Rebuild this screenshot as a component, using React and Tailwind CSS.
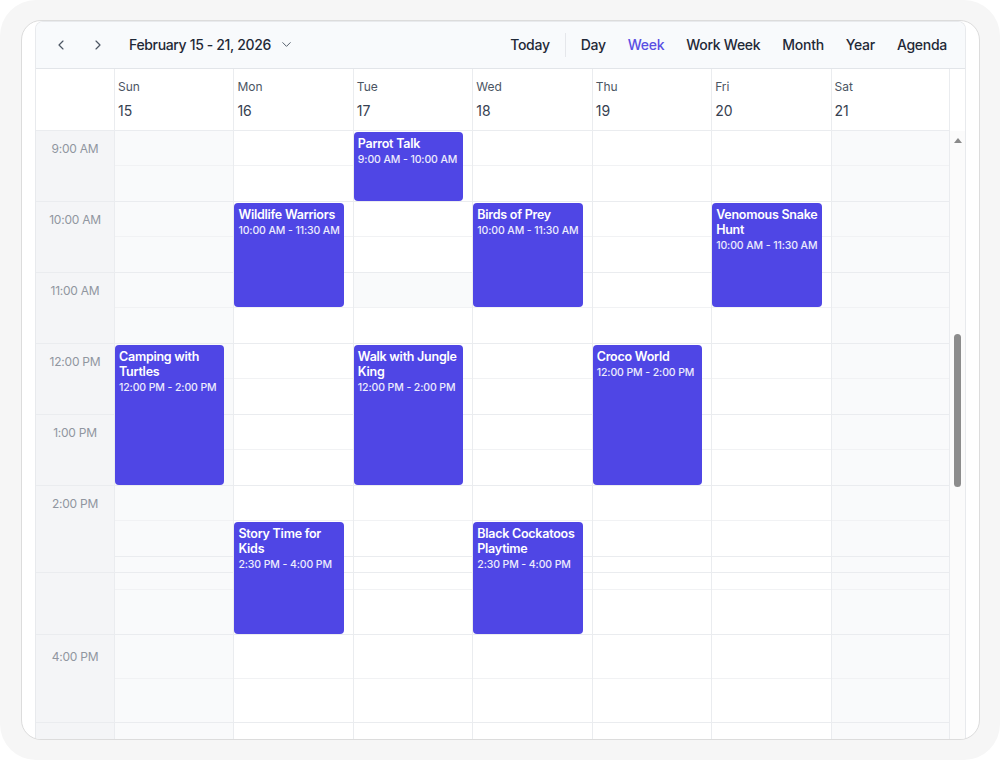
import { ChevronDown, ChevronLeft, ChevronRight } from 'lucide-react'

const days = [
  { name: 'Sun', date: 15, weekend: true },
  { name: 'Mon', date: 16 },
  { name: 'Tue', date: 17 },
  { name: 'Wed', date: 18 },
  { name: 'Thu', date: 19 },
  { name: 'Fri', date: 20 },
  { name: 'Sat', date: 21, weekend: true },
]

// half-hour slots as they sit on screen (the 3 PM block is squeezed)
const rows = [
  { h: 'h-[35px]', label: '9:00 AM', line: 'half' },
  { h: 'h-[36px]', line: 'hour' },
  { h: 'h-[35px]', label: '10:00 AM', line: 'half' },
  { h: 'h-[36px]', line: 'hour' },
  { h: 'h-[35px]', label: '11:00 AM', line: 'half' },
  { h: 'h-[36px]', line: 'hour' },
  { h: 'h-[35px]', label: '12:00 PM', line: 'half' },
  { h: 'h-[36px]', line: 'hour' },
  { h: 'h-[35px]', label: '1:00 PM', line: 'half' },
  { h: 'h-[36px]', line: 'hour' },
  { h: 'h-[35px]', label: '2:00 PM', line: 'half' },
  { h: 'h-[36px]', line: 'hour', timeLine: 'none' },
  { h: 'h-[16px]', line: 'hour', timeLine: 'hour' },
  { h: 'h-[17px]', line: 'half', timeLine: 'none' },
  { h: 'h-[45px]', line: 'hour' },
  { h: 'h-[44px]', label: '4:00 PM', line: 'half' },
  { h: 'h-[44px]', line: 'hour' },
  { h: 'flex-1', line: 'none' },
]

const events = {
  Sun: [{ title: 'Camping with Turtles', time: '12:00 PM - 2:00 PM', pos: 'top-[214px] h-[140px]' }],
  Mon: [
    { title: 'Wildlife Warriors', time: '10:00 AM - 11:30 AM', pos: 'top-[72px] h-[104px]' },
    { title: 'Story Time for Kids', time: '2:30 PM - 4:00 PM', pos: 'top-[391px] h-[112px]' },
  ],
  Tue: [
    { title: 'Parrot Talk', time: '9:00 AM - 10:00 AM', pos: 'top-[1px] h-[69px]' },
    { title: 'Walk with Jungle King', time: '12:00 PM - 2:00 PM', pos: 'top-[214px] h-[140px]' },
  ],
  Wed: [
    { title: 'Birds of Prey', time: '10:00 AM - 11:30 AM', pos: 'top-[72px] h-[104px]' },
    { title: 'Black Cockatoos Playtime', time: '2:30 PM - 4:00 PM', pos: 'top-[391px] h-[112px]' },
  ],
  Thu: [{ title: 'Croco World', time: '12:00 PM - 2:00 PM', pos: 'top-[214px] h-[140px]' }],
  Fri: [{ title: 'Venomous Snake Hunt', time: '10:00 AM - 11:30 AM', pos: 'top-[72px] h-[104px]' }],
  Sat: [],
}

const views = ['Day', 'Week', 'Work Week', 'Month', 'Year', 'Agenda']

const lineClass = {
  hour: 'border-b border-[#eaecef]',
  half: 'border-b border-[#f1f2f4]',
  none: '',
}

function EventCard({ ev }) {
  return (
    <div
      className={`absolute left-0 right-[9px] ${ev.pos} rounded-[4px] bg-[#4f46e5] px-[4px] pt-[4px] text-white`}
    >
      <div className="text-[12.5px] leading-[15px] font-semibold tracking-[-0.02em]">{ev.title}</div>
      <div className="mt-[2px] text-[10.5px] leading-[14px] font-medium tracking-[-0.01em] text-white/90">
        {ev.time}
      </div>
    </div>
  )
}

export default function App() {
  return (
    <div className="w-[1000px] h-[760px] bg-white font-['Inter','Liberation_Sans',sans-serif]">
      <div className="h-full rounded-[36px] bg-[#f6f6f6] pt-[20px] pl-[21px]">
        <div className="w-[959px] h-[720px] rounded-[20px] border border-[#dcdcdc] bg-white px-[13px] overflow-hidden">
          <div className="h-full flex flex-col rounded-t-[8px] border-x border-t border-[#e8eaed] overflow-hidden">
            {/* toolbar */}
            <div className="h-[47px] shrink-0 flex items-center justify-between bg-[#f8fafc] border-b border-[#e2e5e9] pl-[9px] pr-[7px] pb-[1px]">
              <div className="flex items-center">
                <button className="w-8 h-8 flex items-center justify-center text-[#4b5563]">
                  <ChevronLeft size={16} strokeWidth={1.75} />
                </button>
                <button className="ml-[5px] w-8 h-8 flex items-center justify-center text-[#4b5563]">
                  <ChevronRight size={16} strokeWidth={1.75} />
                </button>
                <button className="ml-[15px] flex items-center gap-[8px] text-[14px] font-medium tracking-[-0.025em] text-[#1f2937]">
                  February 15 - 21, 2026
                  <ChevronDown size={15} strokeWidth={1.5} className="text-[#4b5563]" />
                </button>
              </div>
              <div className="flex items-center text-sm font-medium tracking-[-0.02em] text-[#1f2937]">
                <button className="px-[11px] py-1">Today</button>
                <div className="mx-[4px] h-[24px] w-px bg-[#e5e7eb]" />
                {views.map((v) => (
                  <button
                    key={v}
                    className={`px-[11px] py-1 ${v === 'Week' ? 'text-[#5a4fe3]' : ''}`}
                  >
                    {v}
                  </button>
                ))}
              </div>
            </div>

            {/* day header */}
            <div className="h-[62px] shrink-0 grid grid-cols-[78px_repeat(7,1fr)_15px]">
              <div className="border-b border-[#eaecef]" />
              {days.map((d, i) => (
                <div
                  key={d.name}
                  className={`border-l border-b border-[#eaecef] pl-[3px] pt-[10px] ${i === 6 ? 'border-r' : ''}`}
                >
                  <div className="text-xs leading-4 text-[#4b5563]">{d.name}</div>
                  <div className="mt-[6px] text-sm leading-5 text-[#374151]">{d.date}</div>
                </div>
              ))}
              <div />
            </div>

            {/* time grid */}
            <div className="flex-1 grid grid-cols-[78px_repeat(7,1fr)_15px]">
              <div className="flex flex-col bg-[#f4f5f7]">
                {rows.map((r, i) => (
                  <div
                    key={i}
                    className={`${r.h} ${lineClass[r.timeLine ?? (r.line === 'hour' ? 'hour' : 'none')]} flex items-center justify-center text-xs tracking-[-0.02em] text-[#9096a0]`}
                  >
                    {r.label}
                  </div>
                ))}
              </div>
              {days.map((d, di) => (
                <div
                  key={d.name}
                  className={`relative flex flex-col border-l border-[#eaecef] ${di === 6 ? 'border-r' : ''} ${d.weekend ? 'bg-[#f9fafb]' : 'bg-white'}`}
                >
                  {rows.map((r, i) => (
                    <div
                      key={i}
                      className={`${r.h} ${lineClass[r.line]} ${d.name === 'Tue' && i === 4 ? 'bg-[#f9fafb]' : ''}`}
                    />
                  ))}
                  {events[d.name].map((ev) => (
                    <EventCard key={ev.title} ev={ev} />
                  ))}
                </div>
              ))}
              <div className="flex flex-col items-center bg-[#fbfbfb] pt-[7px]">
                <div className="w-0 h-0 border-x-[4px] border-x-transparent border-b-[5px] border-b-[#8a8a8a]" />
                <div className="mt-[191px] w-[7px] h-[153px] rounded-full bg-[#8c8c8c]" />
              </div>
            </div>
          </div>
        </div>
      </div>
    </div>
  )
}
